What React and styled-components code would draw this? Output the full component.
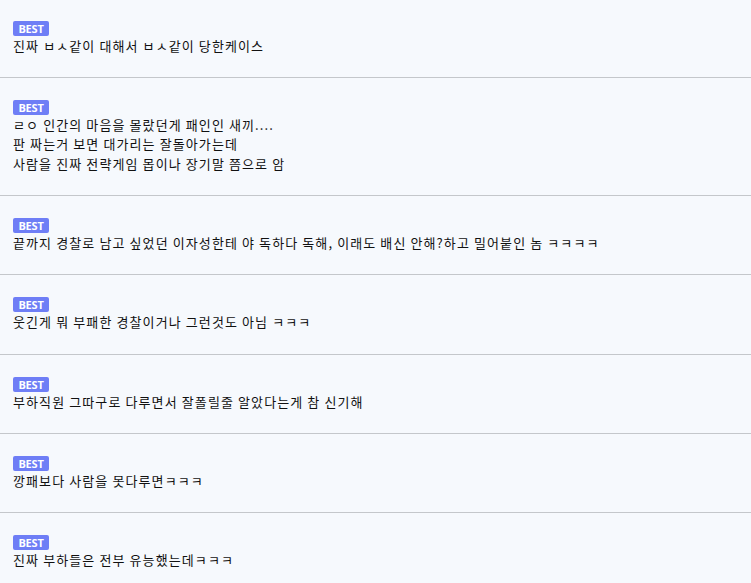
import React from 'react';
import styled, { createGlobalStyle } from 'styled-components';

const GlobalStyle = createGlobalStyle`
  html, body {
    margin: 0;
    padding: 0;
    background: #f6f9fd;
  }
  body {
    font-family: "Noto Sans CJK KR", "Noto Sans", sans-serif;
  }
`;

const List = styled.ul`
  list-style: none;
  margin: 0;
  padding: 0;
  background: #f6f9fd;
`;

const Item = styled.li`
  display: flex;
  flex-direction: column;
  align-items: flex-start;
  padding: 22px 13px 21.83px;
  border-top: 1px solid #c4c7cb;

  &:first-child {
    border-top: none;
    padding-top: 20.5px;
  }
`;

const Badge = styled.span`
  display: inline-flex;
  align-items: center;
  justify-content: center;
  width: 36px;
  height: 15px;
  border-radius: 2px;
  background: #6e7ef6;
  color: #ffffff;
  font-family: "Open Sans", "Liberation Sans", sans-serif;
  font-size: 11px;
  font-weight: 700;
  letter-spacing: -0.2px;
`;

const Text = styled.p`
  margin: 0;
  font-size: 13px;
  line-height: 19.5px;
  letter-spacing: 1.1px;
  color: #111111;
  white-space: pre-line;
`;

const comments = [
  '진짜 ㅂㅅ같이 대해서 ㅂㅅ같이 당한케이스',
  'ㄹㅇ 인간의 마음을 몰랐던게 패인인 새끼....\n판 짜는거 보면 대가리는 잘돌아가는데\n사람을 진짜 전략게임 몹이나 장기말 쯤으로 암',
  '끝까지 경찰로 남고 싶었던 이자성한테 야 독하다 독해, 이래도 배신 안해?하고 밀어붙인 놈 ㅋㅋㅋㅋ',
  '웃긴게 뭐 부패한 경찰이거나 그런것도 아님 ㅋㅋㅋ',
  '부하직원 그따구로 다루면서 잘폴릴줄 알았다는게 참 신기해',
  '깡패보다 사람을 못다루면ㅋㅋㅋ',
  '진짜 부하들은 전부 유능했는데ㅋㅋㅋ',
];

export default function App() {
  return (
    <>
      <GlobalStyle />
      <List>
        {comments.map((text, i) => (
          <Item key={i}>
            <Badge>BEST</Badge>
            <Text>{text}</Text>
          </Item>
        ))}
      </List>
    </>
  );
}
